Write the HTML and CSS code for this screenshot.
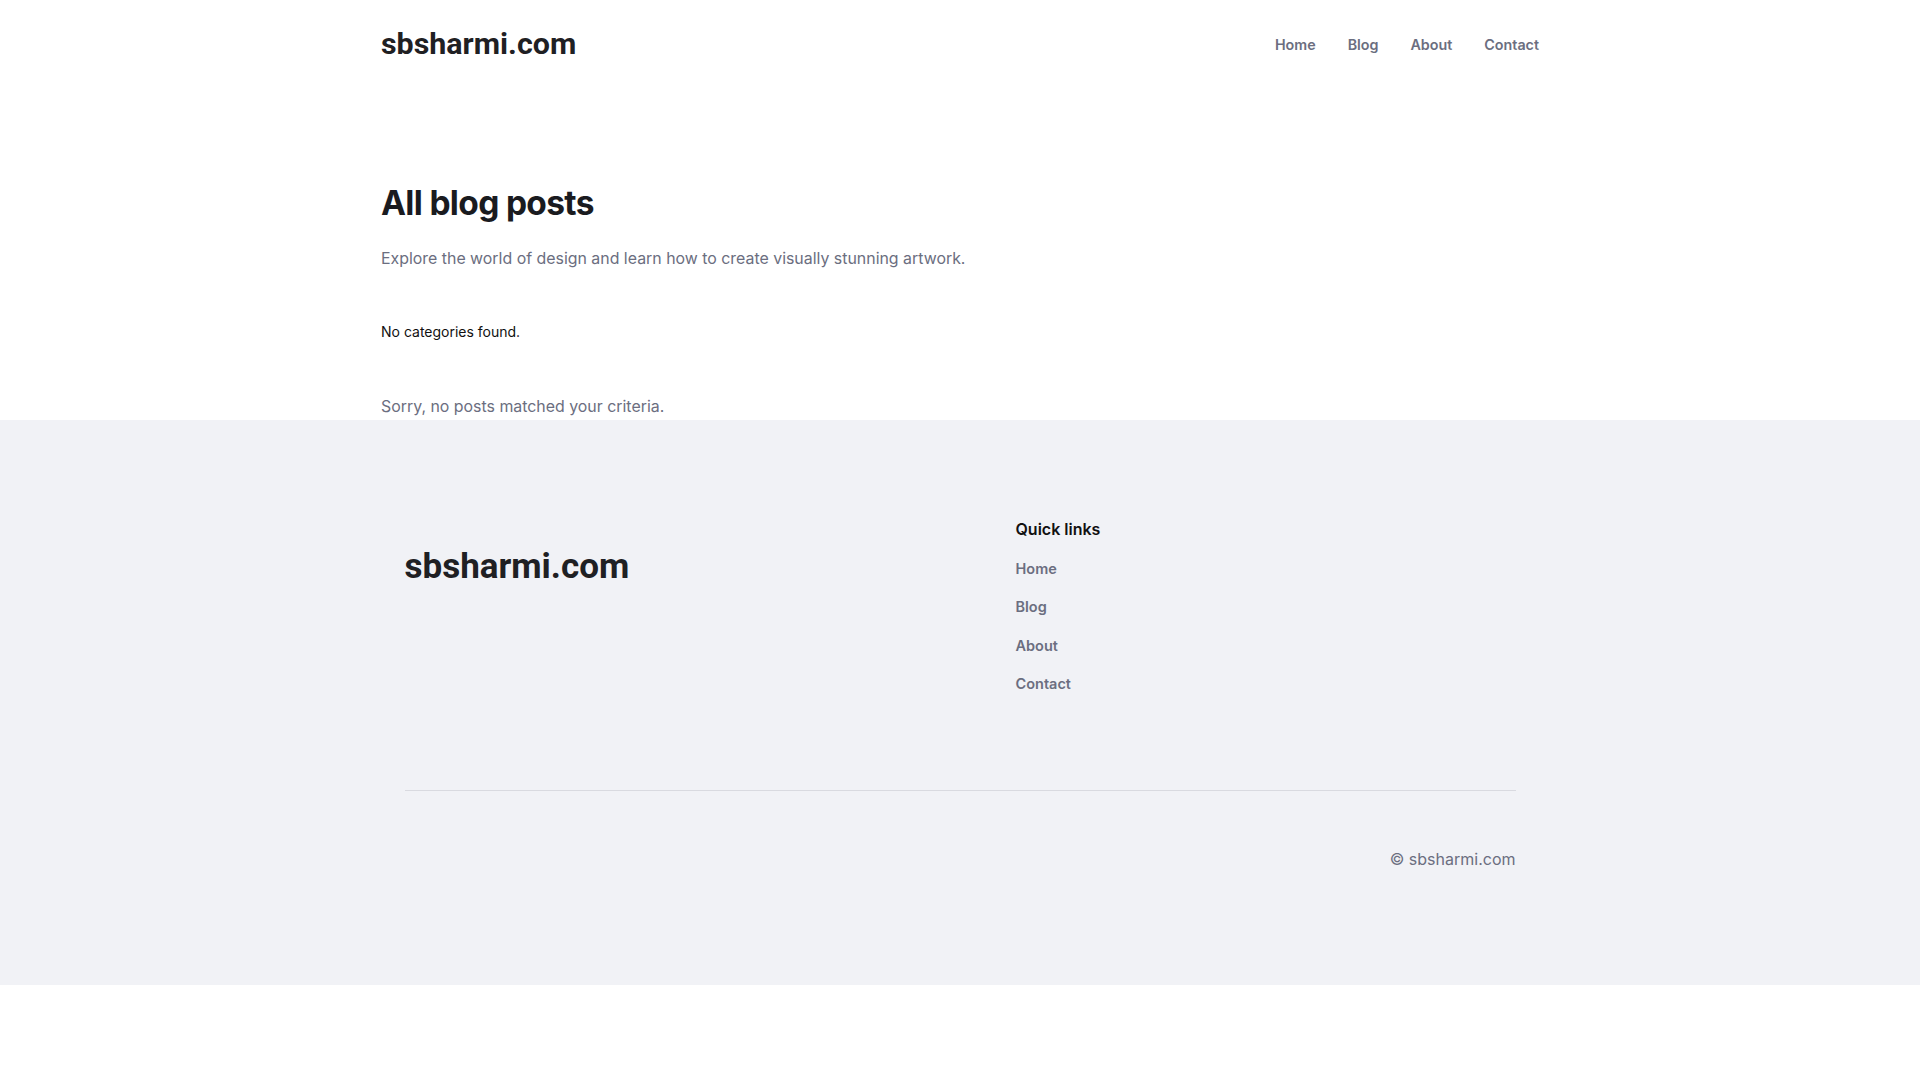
FILE: index.html
```html
<!DOCTYPE html>
<html lang="en">
<head>
<meta charset="utf-8">
<title>All blog posts - sbsharmi.com</title>
<link rel="stylesheet" href="styles.css">
</head>
<body>
<header class="site-header">
  <a class="logo" href="#">sbsharmi.com</a>
  <nav class="nav">
    <a href="#">Home</a>
    <a href="#">Blog</a>
    <a href="#">About</a>
    <a href="#">Contact</a>
  </nav>
</header>
<main class="main">
  <h1 class="title">All blog posts</h1>
  <p class="subtitle">Explore the world of design and learn how to create visually stunning artwork.</p>
  <p class="no-cats">No categories found.</p>
  <p class="no-posts">Sorry, no posts matched your criteria.</p>
</main>
<footer class="footer">
  <div class="footer-inner">
    <div class="footer-grid">
      <div class="footer-brand">sbsharmi.com</div>
      <div class="footer-links">
        <h3 class="links-title">Quick links</h3>
        <ul class="links">
          <li><a href="#">Home</a></li>
          <li><a href="#">Blog</a></li>
          <li><a href="#">About</a></li>
          <li><a href="#">Contact</a></li>
        </ul>
      </div>
    </div>
    <div class="footer-bottom">
      <p class="copy">© sbsharmi.com</p>
    </div>
  </div>
</footer>
</body>
</html>
```

FILE: styles.css
```css
* { box-sizing: border-box; }
html, body { margin: 0; padding: 0; }
body {
  font-family: Inter, "Noto Sans", sans-serif;
  color: #111827;
  background: #ffffff;
}
a { text-decoration: none; color: inherit; }

.site-header {
  width: 1158px;
  margin: 0 auto;
  height: 87px;
  display: flex;
  align-items: center;
  justify-content: space-between;
}
.logo {
  font-family: Roboto, "Liberation Sans", sans-serif;
  font-weight: 700;
  font-size: 30.4px;
  color: #1f2023;
}
.nav {
  display: flex;
  gap: 32px;
  padding-top: 2px;
}
.nav a {
  font-size: 14.3px;
  font-weight: 600;
  color: #6b6e80;
}

.main {
  width: 1158px;
  margin: 0 auto;
  padding-top: 94px;
}
.title {
  margin: 0;
  font-size: 33.5px;
  font-weight: 700;
  letter-spacing: -0.02em;
  line-height: 44px;
  color: #1a1b1f;
}
.subtitle {
  margin: 21px 0 0;
  font-size: 15.9px;
  line-height: 26px;
  color: #6b6e80;
}
.no-cats {
  margin: 49.5px 0 0;
  font-size: 14px;
  line-height: 20px;
  color: #111111;
}
.no-posts {
  margin: 52px 0 0;
  font-size: 15.9px;
  line-height: 26px;
  color: #6b6e80;
}

.footer {
  background: #f1f2f6;
  padding: 97px 0 114px;
}
.footer-inner {
  width: 1111px;
  margin: 0 auto;
}
.footer-grid {
  display: grid;
  grid-template-columns: 611px 1fr;
}
.footer-brand {
  font-family: Roboto, "Liberation Sans", sans-serif;
  font-weight: 700;
  font-size: 35px;
  color: #1f2023;
  padding-top: 29px;
}
.links-title {
  margin: 0;
  font-size: 16px;
  font-weight: 600;
  line-height: 24px;
  color: #111111;
}
.links {
  list-style: none;
  margin: 17px 0 0;
  padding: 0;
  display: flex;
  flex-direction: column;
  gap: 17.5px;
}
.links a {
  font-size: 14.5px;
  font-weight: 600;
  line-height: 20px;
  color: #6b6e80;
}
.footer-bottom {
  margin-top: 96px;
  border-top: 1px solid #d9dae0;
  padding-top: 56px;
  display: flex;
  justify-content: flex-end;
}
.copy {
  margin: 0;
  font-size: 16px;
  line-height: 24px;
  color: #6b6e80;
}
```
